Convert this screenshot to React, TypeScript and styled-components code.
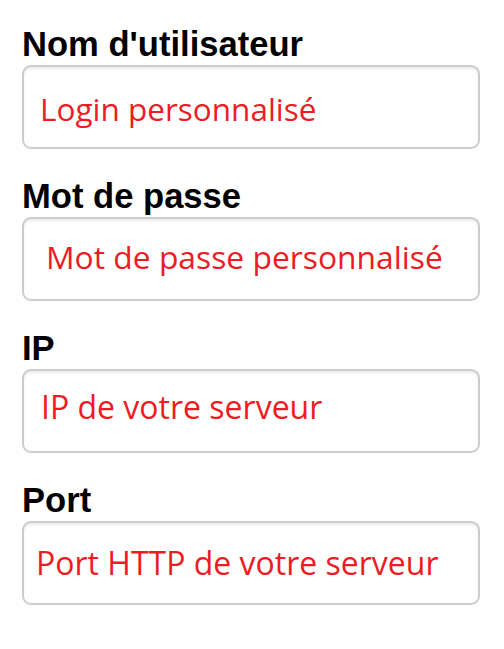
import React from "react";
import styled, { createGlobalStyle } from "styled-components";

const Global = createGlobalStyle`
  html, body { margin: 0; padding: 0; background: #ffffff; }
  body { width: 504px; height: 649px; overflow: hidden; }
`;

const Form = styled.form`
  display: flex;
  flex-direction: column;
  gap: 27px;
  padding: 24px 0 0 22px;
`;

const Group = styled.div`
  display: flex;
  flex-direction: column;
  gap: 1px;
`;

const Label = styled.label`
  font-family: "Liberation Sans", Arial, sans-serif;
  font-weight: 700;
  font-size: 34.6px;
  line-height: 40px;
  color: #000000;
`;

const Field = styled.div<{ $left: number; $top: number }>`
  box-sizing: border-box;
  width: 458px;
  height: 84px;
  border: 2px solid #cccccc;
  border-radius: 9px;
  box-shadow: inset 0 2px 2px rgba(0, 0, 0, 0.075);
  background: #ffffff;
  padding: ${(p) => p.$top}px 0 0 ${(p) => p.$left}px;
`;

const Hint = styled.span<{ $size: number }>`
  display: block;
  font-family: "Open Sans", "Noto Sans", sans-serif;
  font-size: ${(p) => p.$size}px;
  line-height: 40px;
  color: #ed1c24;
  white-space: nowrap;
`;

const fields = [
  { label: "Nom d'utilisateur", hint: "Login personnalisé", left: 16, top: 21.6, size: 31.5 },
  { label: "Mot de passe", hint: "Mot de passe personnalisé", left: 22, top: 17.6, size: 31.8 },
  { label: "IP", hint: "IP de votre serveur", left: 17, top: 15.6, size: 32 },
  { label: "Port", hint: "Port HTTP de votre serveur", left: 12, top: 19.6, size: 32 },
];

export default function App() {
  return (
    <>
      <Global />
      <Form>
        {fields.map((f) => (
          <Group key={f.label}>
            <Label>{f.label}</Label>
            <Field $left={f.left} $top={f.top}>
              <Hint $size={f.size}>{f.hint}</Hint>
            </Field>
          </Group>
        ))}
      </Form>
    </>
  );
}
